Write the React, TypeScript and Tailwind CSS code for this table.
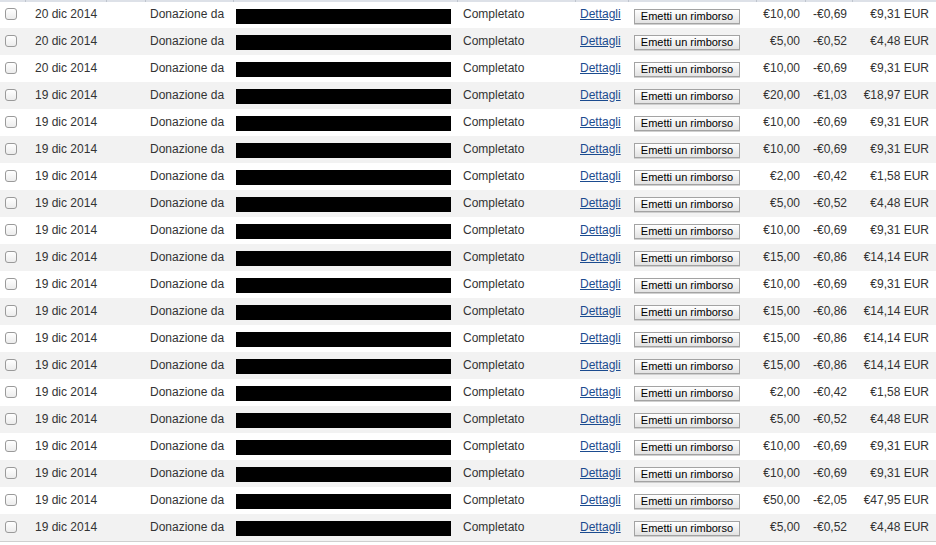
import React from 'react';

const rows = [
  ['20 dic 2014', '€10,00', '-€0,69', '€9,31 EUR'],
  ['20 dic 2014', '€5,00', '-€0,52', '€4,48 EUR'],
  ['20 dic 2014', '€10,00', '-€0,69', '€9,31 EUR'],
  ['19 dic 2014', '€20,00', '-€1,03', '€18,97 EUR'],
  ['19 dic 2014', '€10,00', '-€0,69', '€9,31 EUR'],
  ['19 dic 2014', '€10,00', '-€0,69', '€9,31 EUR'],
  ['19 dic 2014', '€2,00', '-€0,42', '€1,58 EUR'],
  ['19 dic 2014', '€5,00', '-€0,52', '€4,48 EUR'],
  ['19 dic 2014', '€10,00', '-€0,69', '€9,31 EUR'],
  ['19 dic 2014', '€15,00', '-€0,86', '€14,14 EUR'],
  ['19 dic 2014', '€10,00', '-€0,69', '€9,31 EUR'],
  ['19 dic 2014', '€15,00', '-€0,86', '€14,14 EUR'],
  ['19 dic 2014', '€15,00', '-€0,86', '€14,14 EUR'],
  ['19 dic 2014', '€15,00', '-€0,86', '€14,14 EUR'],
  ['19 dic 2014', '€2,00', '-€0,42', '€1,58 EUR'],
  ['19 dic 2014', '€5,00', '-€0,52', '€4,48 EUR'],
  ['19 dic 2014', '€10,00', '-€0,69', '€9,31 EUR'],
  ['19 dic 2014', '€10,00', '-€0,69', '€9,31 EUR'],
  ['19 dic 2014', '€50,00', '-€2,05', '€47,95 EUR'],
  ['19 dic 2014', '€5,00', '-€0,52', '€4,48 EUR'],
];

const dividers = [25, 106, 145, 233, 457, 575, 628, 756, 805, 852];

function Row({ data, index }: { data: string[]; index: number }) {
  const [date, gross, fee, net] = data;
  return (
    <div
      className={`flex items-center ${index === 0 ? 'h-[26px]' : 'h-[27px]'} ${
        index % 2 === 0 ? 'bg-white' : 'bg-[#f2f2f2]'
      }`}
    >
      <div className="w-[30px] pl-[5px] pb-[2px] flex">
        <span className="block h-[12px] w-[12px] rounded-[3px] border border-[#9a9a9a] bg-gradient-to-b from-white to-[#ececec]" />
      </div>
      <div className="w-[120px] pl-[5px] pb-[2px]">{date}</div>
      <div className="w-[85px] pb-[2px]">Donazione da</div>
      <div className="w-[222px] pl-[1px] pt-[2px]">
        <div className="h-[15px] w-[215px] bg-black" />
      </div>
      <div className="w-[118px] pl-[6px] pb-[2px]">Completato</div>
      <div className="w-[53px] pl-[5px] pb-[2px]">
        <span className="text-[#1b4b8f] underline">Dettagli</span>
      </div>
      <div className="w-[127px] pl-[6px] pt-[2px]">
        <div className="flex h-[15px] w-[106px] items-center justify-center border border-[#a3a3a3] bg-gradient-to-b from-white to-[#e2e2e2] text-[11px] text-black shadow-[0_1px_0_#d0d0d0]">
          Emetti un rimborso
        </div>
      </div>
      <div className="w-[50px] pr-[5px] pb-[2px] text-right">{gross}</div>
      <div className="w-[47px] pr-[5px] pb-[2px] text-right">{fee}</div>
      <div className="w-[84px] pr-[7px] pb-[2px] text-right">{net}</div>
    </div>
  );
}

export default function App() {
  return (
    <div className="h-[545px] w-[936px] overflow-hidden bg-white font-['Liberation_Sans',Arial,sans-serif] text-[12px] leading-none text-[#333]">
      {/* cut-off header */}
      <div className="relative h-[2px] bg-[#dde1e8]">
        {dividers.map((x) => (
          <span key={x} className="absolute top-0 h-[2px] w-px bg-[#bfc5ce]" style={{ left: x }} />
        ))}
      </div>
      {rows.map((r, i) => (
        <Row key={i} data={r} index={i} />
      ))}
      <div className="h-px bg-[#cfcfcf]" />
    </div>
  );
}
